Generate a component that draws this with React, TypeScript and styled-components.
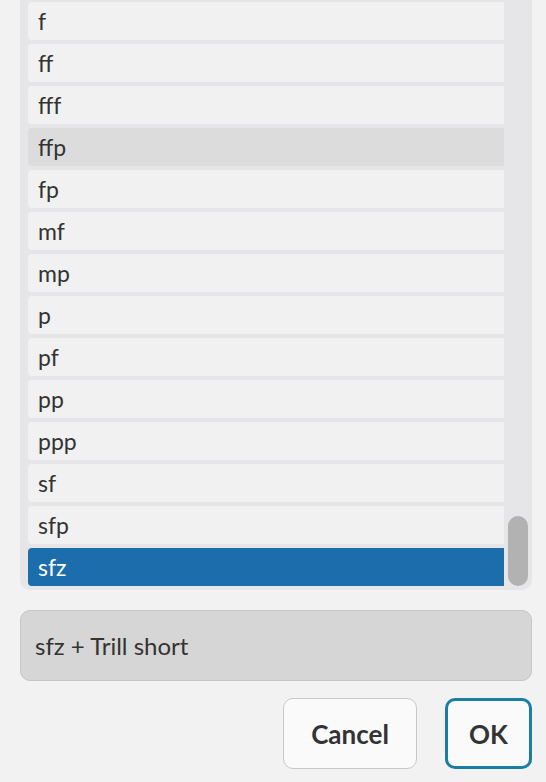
import React from 'react';
import styled, { createGlobalStyle } from 'styled-components';

const GlobalStyle = createGlobalStyle`
  html, body {
    margin: 0;
    padding: 0;
    background: #f2f2f2;
  }
  * {
    box-sizing: border-box;
  }
`;

// the dialog is pinned to the bottom of the window; the list scrolls past the top
const Page = styled.div`
  height: 100vh;
  overflow: hidden;
  display: flex;
  flex-direction: column;
  justify-content: flex-end;
  padding: 0 14px 13px 20px;
  font-family: Lato, 'Open Sans', sans-serif;
  color: #333;
`;

const ListPanel = styled.div`
  flex-shrink: 0;
  display: grid;
  grid-template-columns: 1fr 28px;
  background: #e6e5e7;
  border-radius: 10px;
  padding: 40px 0 4px 8px;
`;

const Rows = styled.div`
  display: flex;
  flex-direction: column;
  gap: 4px;
`;

const Row = styled.div<{ $state?: 'hover' | 'selected' }>`
  height: 38px;
  display: flex;
  align-items: center;
  padding-left: 10px;
  border-radius: 4px 0 0 4px;
  font-size: 23px;
  background: ${(p) =>
    p.$state === 'selected' ? '#1b6dab' : p.$state === 'hover' ? '#dcdcdc' : '#f1f1f1'};
  color: ${(p) => (p.$state === 'selected' ? '#ffffff' : '#333')};
`;

const Track = styled.div`
  display: flex;
  justify-content: center;
`;

const Thumb = styled.div`
  align-self: flex-end;
  width: 20px;
  height: 70px;
  border-radius: 10px;
  background: #b2b2b2;
`;

const NameField = styled.div`
  flex-shrink: 0;
  margin-top: 20px;
  height: 71px;
  display: flex;
  align-items: center;
  padding-left: 14px;
  background: #d6d6d6;
  border: 1.5px solid #c6c6c6;
  border-radius: 10px;
  font-size: 24px;
  color: #333;
`;

const ButtonRow = styled.div`
  flex-shrink: 0;
  display: flex;
  justify-content: flex-end;
  gap: 28px;
  margin-top: 17px;
`;

const Button = styled.button<{ $accent?: boolean }>`
  height: 71px;
  padding: 0 20px;
  min-width: ${(p) => (p.$accent ? '87px' : '134px')};
  background: #fafafa;
  border: ${(p) => (p.$accent ? '3px solid #1a7ea4' : '1.5px solid #c8c8c8')};
  border-radius: 10px;
  font-family: Lato, 'Open Sans', sans-serif;
  font-weight: 700;
  font-size: 26px;
  color: #333;
`;

const items = ['f', 'ff', 'fff', 'ffp', 'fp', 'mf', 'mp', 'p', 'pf', 'pp', 'ppp', 'sf', 'sfp', 'sfz'];

export default function App() {
  return (
    <>
      <GlobalStyle />
      <Page>
        <ListPanel>
          <Rows>
            {items.map((it) => (
              <Row
                key={it}
                $state={it === 'sfz' ? 'selected' : it === 'ffp' ? 'hover' : undefined}
              >
                {it}
              </Row>
            ))}
          </Rows>
          <Track>
            <Thumb />
          </Track>
        </ListPanel>
        <NameField>sfz + Trill short</NameField>
        <ButtonRow>
          <Button>Cancel</Button>
          <Button $accent>OK</Button>
        </ButtonRow>
      </Page>
    </>
  );
}
